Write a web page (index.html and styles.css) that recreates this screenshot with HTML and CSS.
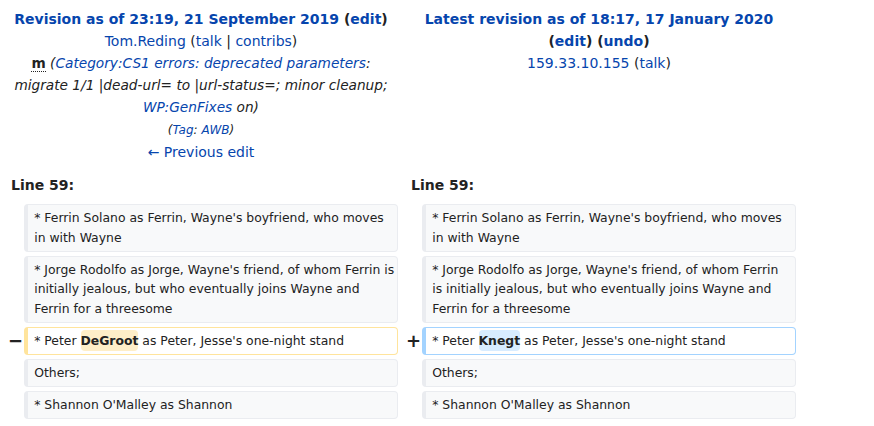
FILE: index.html
```html
<!DOCTYPE html>
<html lang="en">
<head>
<meta charset="utf-8">
<title>Diff</title>
<link rel="stylesheet" href="styles.css">
</head>
<body>
<div class="diff">
  <div class="title">
    <div><strong><a href="#">Revision as of 23:19, 21 September 2019</a> <span class="ed">(<a href="#">edit</a>)</span></strong></div>
    <div><a href="#">Tom.Reding</a> (<a href="#">talk</a> | <a href="#">contribs</a>)</div>
    <div class="comment"><abbr class="minor" title="This is a minor edit">m</abbr> <span class="summary">(<a href="#">Category:CS1 errors: deprecated parameters</a>: migrate 1/1 |dead-url= to |url-status=; minor cleanup; <a href="#">WP:GenFixes</a> on)</span></div>
    <div><span class="tags">(<a href="#">Tag</a>: <a href="#">AWB</a>)</span></div>
    <div><a href="#">← Previous edit</a></div>
  </div>
  <div class="title">
    <div><strong><a href="#">Latest revision as of 18:17, 17 January 2020</a></strong></div>
    <div><strong>(<a href="#">edit</a>) (<a href="#">undo</a>)</strong></div>
    <div><a href="#">159.33.10.155</a> (<a href="#">talk</a>)</div>
  </div>

  <div class="lineno">Line 59:</div>
  <div class="lineno lineno-r">Line 59:</div>

  <div class="marker"></div>
  <div class="cell left context">* Ferrin Solano as Ferrin, Wayne's boyfriend, who moves in with Wayne</div>
  <div class="marker"></div>
  <div class="cell context">* Ferrin Solano as Ferrin, Wayne's boyfriend, who moves in with Wayne</div>

  <div class="marker"></div>
  <div class="cell left context">* Jorge Rodolfo as Jorge, Wayne's friend, of whom Ferrin is initially jealous, but who eventually joins Wayne and Ferrin for a threesome</div>
  <div class="marker"></div>
  <div class="cell context">* Jorge Rodolfo as Jorge, Wayne's friend, of whom Ferrin is initially jealous, but who eventually joins Wayne and Ferrin for a threesome</div>

  <div class="marker">−</div>
  <div class="cell left deleted">* Peter <del class="change">DeGroot</del> as Peter, Jesse's one-night stand</div>
  <div class="marker">+</div>
  <div class="cell added">* Peter <ins class="change">Knegt</ins> as Peter, Jesse's one-night stand</div>

  <div class="marker"></div>
  <div class="cell left context">Others;</div>
  <div class="marker"></div>
  <div class="cell context">Others;</div>

  <div class="marker"></div>
  <div class="cell left context">* Shannon O'Malley as Shannon</div>
  <div class="marker"></div>
  <div class="cell context">* Shannon O'Malley as Shannon</div>
</div>
</body>
</html>
```
FILE: styles.css
```css
html, body {
  margin: 0;
  padding: 0;
  background: #ffffff;
}
body {
  font-family: "DejaVu Sans", sans-serif;
  color: #222222;
  font-size: 14px;
}
a {
  color: #0645ad;
  text-decoration: none;
}
.diff {
  display: grid;
  grid-template-columns: 16px 374px 16px 374px;
  column-gap: 4px;
  row-gap: 4px;
  padding: 8px 0 0 4px;
}
.title {
  grid-column: span 2;
  text-align: center;
  line-height: 22px;
}
.title strong {
  font-weight: bold;
}
.comment {
  font-size: 13.7px;
  line-height: 22px;
  padding: 0 4px;
}
.minor {
  font-weight: bold;
  text-decoration: none;
  border-bottom: 1px dotted #222;
  cursor: help;
}
.summary {
  font-style: italic;
}
.tags {
  font-style: italic;
  font-size: 12px;
}
.lineno {
  grid-column: span 2;
  font-weight: bold;
  line-height: 22px;
  padding: 7px 0 4px 7px;
}
.lineno-r {
  padding-left: 9px;
}
.marker {
  font-weight: bold;
  font-size: 18px;
  line-height: 1;
  text-align: right;
  align-self: center;
  margin-right: -3px;
}
.cell {
  font-size: 12.4px;
  line-height: 19.7px;
  padding: 3.1px 6.2px;
  border-style: solid;
  border-width: 1px 1px 1px 4px;
  border-radius: 4px;
  overflow-wrap: break-word;
}
.cell.left {
  padding-right: 0;
}
.context {
  background: #f8f9fa;
  border-color: #eaecf0;
}
.deleted {
  background: #ffffff;
  border-color: #ffe49c;
}
.added {
  background: #ffffff;
  border-color: #a3d3ff;
}
.change {
  font-weight: bold;
  text-decoration: none;
  border-radius: 4px;
  padding: 0.25em 0;
}
del.change {
  background: #feeec8;
}
ins.change {
  background: #d8ecff;
}
```
